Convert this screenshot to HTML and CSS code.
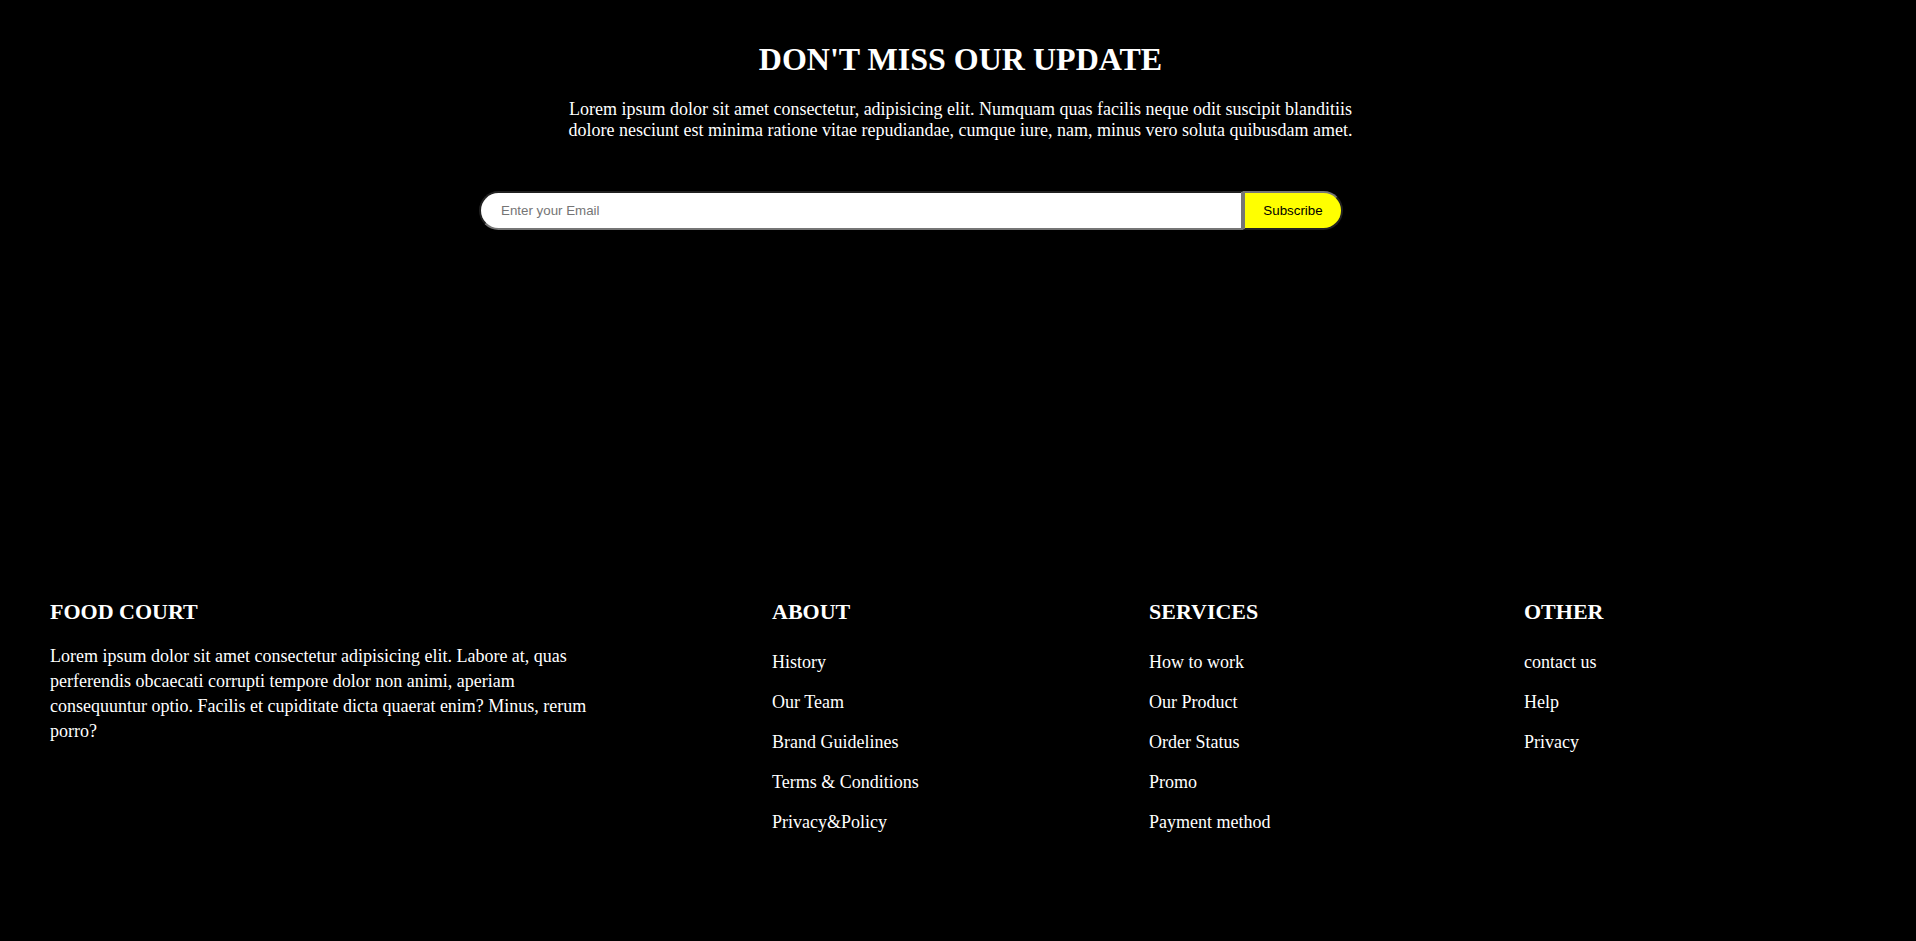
FILE: index.html
```html
<!DOCTYPE html>
<html lang="en">
<head>
<meta charset="utf-8">
<title>Food Court</title>
<link rel="stylesheet" href="styles.css">
</head>
<body>
<section class="newsletter">
  <h1 class="newsletter-title">DON'T MISS OUR UPDATE</h1>
  <p class="newsletter-text">Lorem ipsum dolor sit amet consectetur, adipisicing elit. Numquam quas facilis neque odit suscipit blanditiis dolore nesciunt est minima ratione vitae repudiandae, cumque iure, nam, minus vero soluta quibusdam amet.</p>
  <form class="subscribe">
    <input class="subscribe-input" type="email" placeholder="Enter your Email">
    <button class="subscribe-btn" type="button">Subscribe</button>
  </form>
</section>
<footer class="footer">
  <div class="footer-col">
    <h3 class="footer-title">FOOD COURT</h3>
    <p class="footer-text">Lorem ipsum dolor sit amet consectetur adipisicing elit. Labore at, quas perferendis obcaecati corrupti tempore dolor non animi, aperiam consequuntur optio. Facilis et cupiditate dicta quaerat enim? Minus, rerum porro?</p>
  </div>
  <div class="footer-col">
    <h3 class="footer-title">ABOUT</h3>
    <ul class="footer-links">
      <li><a href="#">History</a></li>
      <li><a href="#">Our Team</a></li>
      <li><a href="#">Brand Guidelines</a></li>
      <li><a href="#">Terms &amp; Conditions</a></li>
      <li><a href="#">Privacy&amp;Policy</a></li>
    </ul>
  </div>
  <div class="footer-col">
    <h3 class="footer-title">SERVICES</h3>
    <ul class="footer-links">
      <li><a href="#">How to work</a></li>
      <li><a href="#">Our Product</a></li>
      <li><a href="#">Order Status</a></li>
      <li><a href="#">Promo</a></li>
      <li><a href="#">Payment method</a></li>
    </ul>
  </div>
  <div class="footer-col">
    <h3 class="footer-title">OTHER</h3>
    <ul class="footer-links">
      <li><a href="#">contact us</a></li>
      <li><a href="#">Help</a></li>
      <li><a href="#">Privacy</a></li>
    </ul>
  </div>
</footer>
</body>
</html>
```
FILE: styles.css
```css
html, body {
  margin: 0;
  padding: 0;
  background: #000;
}
body {
  color: #fff;
  font-family: "Liberation Serif", "Times New Roman", serif;
  font-size: 18px;
  min-height: 941px;
}
.newsletter {
  padding: 41px 0 0 5px;
  text-align: center;
}
.newsletter-title {
  margin: 0 0 21.44px;
  font-size: 32px;
  font-weight: bold;
  line-height: normal;
}
.newsletter-text {
  max-width: 800px;
  margin: 0 auto;
  font-size: 18px;
  line-height: normal;
}
.subscribe {
  display: flex;
  width: 864px;
  margin: 50px 0 0 474px;
}
.subscribe-input {
  box-sizing: border-box;
  width: 764px;
  height: 39px;
  padding: 0 20px;
  border: 2px inset #767676;
  border-radius: 20px 0 0 20px;
  background: #fff;
  color: #000;
  font-family: "Liberation Sans", Arial, sans-serif;
  font-size: 13.333px;
  outline: none;
}
.subscribe-input::placeholder {
  color: #757575;
}
.subscribe-btn {
  box-sizing: border-box;
  width: 100px;
  padding: 0;
  border: 2px outset #767676;
  border-radius: 0 20px 20px 0;
  background: #ff0;
  color: #000;
  font-family: "Liberation Sans", Arial, sans-serif;
  font-size: 13.333px;
}
.footer {
  display: grid;
  grid-template-columns: 690px 345px 343px 1fr;
  column-gap: 32px;
  padding: 0 45px 0 50px;
  margin-top: 369px;
  text-align: left;
}
.footer-title {
  margin: 0 0 20px;
  font-size: 22px;
  font-weight: bold;
  line-height: normal;
}
.footer-text {
  max-width: 560px;
  margin: -1px 0 0;
  line-height: 24.8px;
}
.footer-links {
  list-style: none;
  margin: 27px 0 0;
  padding: 0;
}
.footer-links li {
  margin-bottom: 19px;
  line-height: normal;
}
.footer-links a {
  color: #fff;
  text-decoration: none;
}
```
